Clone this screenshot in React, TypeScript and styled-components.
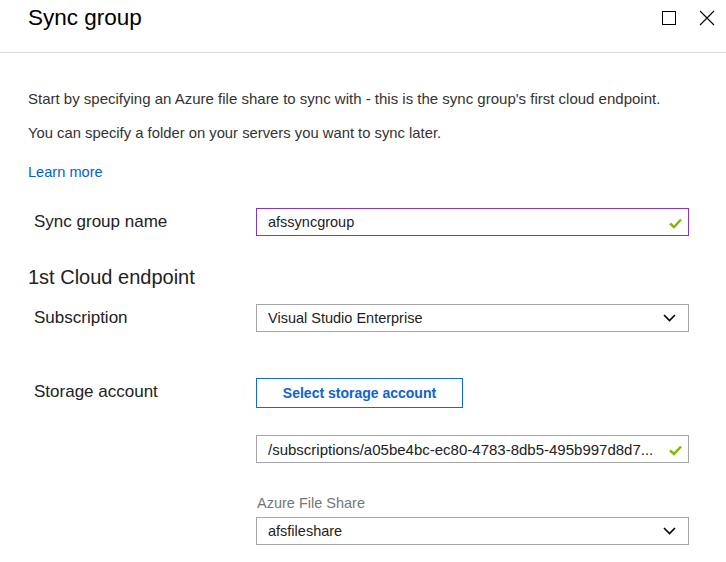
import React from "react";
import styled, { createGlobalStyle } from "styled-components";

const Global = createGlobalStyle`
  html, body { margin: 0; padding: 0; background: #fff; }
  body { font-family: "Liberation Sans", Arial, sans-serif; color: #323232; }
  * { box-sizing: border-box; }
`;

const Blade = styled.div`
  width: 726px;
  height: 562px;
  overflow: hidden;
  background: #fff;
`;

const Header = styled.header`
  height: 53px;
  border-bottom: 1px solid #dcdcdc;
  display: flex;
  align-items: flex-start;
  justify-content: space-between;
  padding: 4px 11px 0 28px;
`;

const Title = styled.h1`
  margin: 0;
  font-size: 22.5px;
  font-weight: 400;
  color: #000;
  line-height: 28px;
`;

const HeaderActions = styled.div`
  display: flex;
  align-items: center;
  gap: 23px;
  padding-top: 6px;
`;

const IconButton = styled.button`
  border: 0;
  background: none;
  padding: 0;
  display: flex;
  align-items: center;
  justify-content: center;
  color: #000;
`;

const Body = styled.div`
  padding: 38px 37px 0 28px;
`;

const Paragraph = styled.p<{ $gap?: number; $size?: number }>`
  margin: 0 0 ${(p) => p.$gap ?? 18}px 0;
  font-size: ${(p) => p.$size ?? 15}px;
  line-height: 16px;
  color: #333;
`;

const Link = styled.a`
  display: inline-block;
  font-size: 14.6px;
  line-height: 16px;
  color: #0063d1;
  text-decoration: none;
`;

const Row = styled.div<{ $top: number }>`
  display: grid;
  grid-template-columns: 228px 1fr;
  margin-top: ${(p) => p.$top}px;
  align-items: start;
`;

const Label = styled.div`
  padding-left: 6px;
  font-size: 17px;
  line-height: 28px;
  color: #222;
`;

const Control = styled.div`
  display: flex;
  flex-direction: column;
`;

const Section = styled.h2`
  margin: 29px 0 0 0;
  font-size: 20px;
  font-weight: 400;
  line-height: 24px;
  color: #222;
`;

const Field = styled.div<{ $focused?: boolean; $wide?: boolean }>`
  height: 28px;
  border: 1px solid ${(p) => (p.$focused ? "#8a36b5" : "#a6a6a6")};
  display: flex;
  align-items: center;
  padding: 0 12px 0 11px;
  font-size: ${(p) => (p.$wide ? 15 : 14.5)}px;
  color: #222;
`;

const FieldText = styled.span`
  flex: 1;
  white-space: nowrap;
  overflow: hidden;
`;

const SubLabel = styled.div`
  margin: 32px 0 6px 1px;
  font-size: 14.5px;
  line-height: 16px;
  color: #777;
`;

const ActionButton = styled.button`
  width: 207px;
  height: 30px;
  border: 1px solid #0f6cd5;
  background: #fff;
  color: #0f62cf;
  font-family: inherit;
  font-size: 14px;
  font-weight: 700;
  margin-bottom: 27px;
  padding: 0;
`;

const CheckMark = styled.svg`
  margin-right: -6px;
  margin-top: 2px;
  flex: none;
`;

const Check = () => (
  <CheckMark width="13" height="11" viewBox="0 0 13 11">
    <path d="M1 5.5 L5 9 L12 1.5" fill="none" stroke="#7cba00" strokeWidth="2.4" />
  </CheckMark>
);

const Chevron = () => (
  <svg width="13" height="8" viewBox="0 0 13 8">
    <path d="M1 1 L6.5 6.5 L12 1" fill="none" stroke="#000" strokeWidth="1.6" />
  </svg>
);

export default function App() {
  return (
    <Blade>
      <Global />
      <Header>
        <Title>Sync group</Title>
        <HeaderActions>
          <IconButton aria-label="Maximize">
            <svg width="14" height="14" viewBox="0 0 14 14">
              <rect x="0.5" y="0.5" width="13" height="13" fill="none" stroke="#000" strokeWidth="1" />
            </svg>
          </IconButton>
          <IconButton aria-label="Close">
            <svg width="16" height="16" viewBox="0 0 16 16">
              <path d="M1 1 L15 15 M15 1 L1 15" stroke="#000" strokeWidth="1.1" />
            </svg>
          </IconButton>
        </HeaderActions>
      </Header>
      <Body>
        <Paragraph>
          Start by specifying an Azure file share to sync with - this is the sync group's first cloud endpoint.
        </Paragraph>
        <Paragraph $gap={22} $size={14.8}>
          You can specify a folder on your servers you want to sync later.
        </Paragraph>
        <Link href="#">Learn more</Link>
        <Row $top={27}>
          <Label>Sync group name</Label>
          <Field $focused>
            <FieldText>afssyncgroup</FieldText>
            <Check />
          </Field>
        </Row>
        <Section>1st Cloud endpoint</Section>
        <Row $top={15}>
          <Label>Subscription</Label>
          <Field>
            <FieldText>Visual Studio Enterprise</FieldText>
            <Chevron />
          </Field>
        </Row>
        <Row $top={46}>
          <Label>Storage account</Label>
          <Control>
            <ActionButton>Select storage account</ActionButton>
            <Field $wide>
              <FieldText>/subscriptions/a05be4bc-ec80-4783-8db5-495b997d8d7...</FieldText>
              <Check />
            </Field>
            <SubLabel>Azure File Share</SubLabel>
            <Field>
              <FieldText>afsfileshare</FieldText>
              <Chevron />
            </Field>
          </Control>
        </Row>
      </Body>
    </Blade>
  );
}
